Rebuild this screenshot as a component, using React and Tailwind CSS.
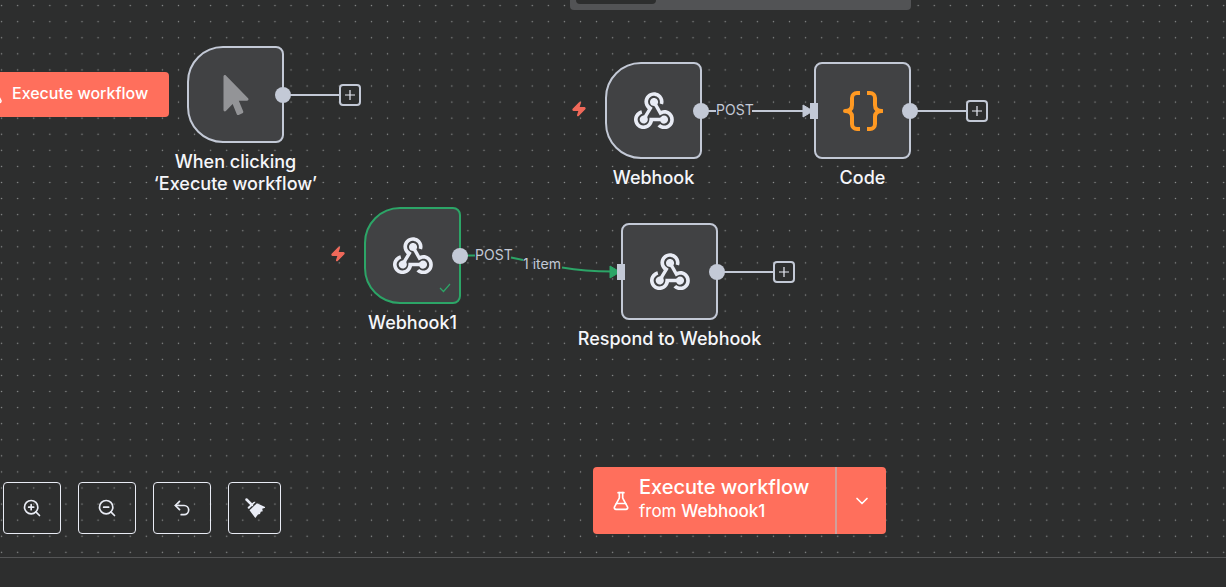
import { ChevronDown, FlaskConical, Undo2, Zap, ZoomIn, ZoomOut } from "lucide-react";
import { FaMousePointer } from "react-icons/fa";

function WebhookIcon() {
  return (
    <svg viewBox="0 0 256 239" className="w-10" fill="#e9ecf5" aria-hidden="true">
      <path d="M119.54 100.503c-10.61 17.836-20.775 35.108-31.152 52.25-2.665 4.401-3.984 7.986-1.855 13.58 5.878 15.454-2.414 30.493-17.998 34.575-14.697 3.851-29.016-5.808-31.932-21.543-2.584-13.927 8.224-27.58 23.58-29.757 1.286-.184 2.6-.205 4.762-.367l23.358-39.168C73.612 95.465 64.868 78.39 66.803 57.23c1.368-14.957 7.25-27.883 18-38.477 20.59-20.288 52.002-23.573 76.246-8.001 23.284 14.958 33.948 44.094 24.858 69.031-6.854-1.858-13.756-3.732-21.343-5.79 2.854-13.865.743-26.315-8.608-36.981-6.178-7.042-14.106-10.733-23.12-12.093-18.072-2.73-35.815 8.88-41.08 26.618-5.976 20.132 3.069 36.575 27.784 48.967z" />
      <path d="M149.841 79.41c7.475 13.187 15.065 26.573 22.587 39.836 38.02-11.763 66.686 9.284 76.97 31.817 12.422 27.219 3.93 59.457-20.465 76.25-25.04 17.238-56.707 14.293-78.892-7.851 5.654-4.733 11.336-9.487 17.407-14.566 21.912 14.192 41.077 13.524 55.305-3.282 12.133-14.337 11.87-35.714-.615-49.75-14.408-16.197-33.707-16.691-57.035-1.143-9.677-17.168-19.522-34.199-28.893-51.491-3.16-5.828-6.648-9.21-13.77-10.443-11.893-2.062-19.571-12.275-20.032-23.717-.453-11.316 6.214-21.545 16.634-25.53 10.322-3.949 22.435-.762 29.378 8.014 5.674 7.17 7.477 15.24 4.491 24.083-.83 2.466-1.905 4.852-3.07 7.774z" />
      <path d="M167.707 187.21h-45.77c-4.387 18.044-13.863 32.612-30.19 41.876-12.693 7.2-26.373 9.641-40.933 7.29-26.808-4.323-48.728-28.456-50.658-55.63-2.184-30.784 18.975-58.147 47.178-64.293 1.947 7.071 3.915 14.21 5.862 21.264-25.876 13.202-34.832 29.836-27.59 50.636 6.375 18.304 24.484 28.337 44.147 24.457 20.08-3.962 30.204-20.65 28.968-47.432 19.036 0 38.088-.197 57.126.097 7.434.117 13.173-.654 18.773-7.208 9.22-10.784 26.191-9.811 36.121.374 10.148 10.409 9.662 27.157-1.077 37.127-10.361 9.62-26.73 9.106-36.424-1.26-1.992-2.136-3.562-4.673-5.533-7.298z" />
    </svg>
  );
}

function CodeIcon() {
  return (
    <svg viewBox="0 0 40 42" className="h-[42px] w-10" fill="none" stroke="#ff9922" strokeWidth="4" strokeLinejoin="round" aria-hidden="true">
      <path d="M17 3h-3a5 5 0 0 0-5 5v7c0 4-2 6-7 6 5 0 7 2 7 6v7a5 5 0 0 0 5 5h3" />
      <path d="M24 3h3a5 5 0 0 1 5 5v7c0 4 2 6 7 6-5 0-7 2-7 6v7a5 5 0 0 1-5 5h-3" />
    </svg>
  );
}

function BroomIcon() {
  return (
    <svg viewBox="0 0 22 22" className="size-[22px]" fill="#e9ecf5" aria-hidden="true">
      <path d="M2.500 2.500L8 8" stroke="#e9ecf5" strokeWidth="2.500" strokeLinecap="round" />
      <path d="M3.800 11.200c-.3-1 .1-1.500 1-2l4.200-3.800c.8-.7 1.500-1 2.600-.500L5 11.900z" />
      <path d="M5.500 13.300L12.900 6.200l7.700 3.600c.8.4.5 1.100-.2 1.200l-2.200.8.6 2.400-2 .6-.8 2.200-2 .6L11.300 21z" />
    </svg>
  );
}

function DotGrid() {
  return (
    <svg className="absolute inset-0 h-full w-full" aria-hidden="true">
      <defs>
        <pattern id="dots" width="16.08" height="16.08" patternUnits="userSpaceOnUse" x="-6.44" y="-2.44">
          <circle cx="8.04" cy="8.04" r="0.7" fill="#929494" />
        </pattern>
      </defs>
      <rect width="100%" height="100%" fill="url(#dots)" />
    </svg>
  );
}

function Edges() {
  return (
    <svg className="absolute inset-0 h-full w-full" fill="none" strokeWidth="2" aria-hidden="true">
      <g stroke="#c3c9d6">
        <path d="M283 95H339" />
        <path d="M701 111H716M752 111H806" />
        <path d="M910 111H966" />
        <path d="M717 272H773" />
      </g>
      <path d="M803 105v12l10-6z" fill="#c3c9d6" stroke="#c3c9d6" strokeWidth="1" strokeLinejoin="round" />
      <path d="M460 255.500H475" stroke="#2ca567" />
      <path d="M511 257.500L523 260" stroke="#2ca567" />
      <path d="M562 267.500Q585 271.500 612 271.500" stroke="#2ca567" />
      <path d="M610 266v12l10-6z" fill="#2ca567" stroke="#2ca567" strokeWidth="1" strokeLinejoin="round" />
    </svg>
  );
}

function Node({ label, position, shape = "rounded-lg", border = "border-[#c3c9d6]", input, trigger, done, children }) {
  return (
    <div className={`absolute w-[97px] ${position}`}>
      <div className={`relative flex h-[97px] items-center justify-center border-2 bg-[#414244] ${shape} ${border}`}>
        {children}
        {input && <span className="absolute top-[39px] -left-[6px] h-4 w-2 bg-[#c3c9d6]" />}
        <span className="absolute top-[39px] -right-[9px] size-4 rounded-full bg-[#c3c9d6]" />
        {trigger && <Zap size={16} fill="currentColor" className="absolute top-[37px] -left-[36px] text-[#f0695a]" />}
        {done && (
          <svg viewBox="0 0 12 10" className="absolute right-[8px] bottom-[9px] h-[10px] w-3" fill="none" stroke="#2ca567" strokeWidth="1.200" aria-hidden="true">
            <path d="M1 5l3.500 3.500L11 1" />
          </svg>
        )}
      </div>
      <div className="relative left-1/2 mt-2 w-48 -translate-x-1/2 text-center text-lg leading-[22px] font-medium text-[#f5f6fa]">{label}</div>
    </div>
  );
}

function AddButton({ position }) {
  return (
    <button aria-label="Add node" className={`absolute flex size-[22px] items-center justify-center rounded border-2 border-[#c3c9d6] bg-[#2d2e2e] ${position}`}>
      <svg viewBox="0 0 10 10" className="size-[10px]" stroke="#e9ecf5" strokeWidth="1.200" aria-hidden="true">
        <path d="M5 0v10M0 5h10" />
      </svg>
    </button>
  );
}

function ToolButton({ label, width = "w-[58px]", children }) {
  return (
    <button aria-label={label} className={`flex h-[52px] items-center justify-center rounded border border-[#e9ecf5] text-[#e9ecf5] ${width}`}>
      {children}
    </button>
  );
}

const TRIGGER = "rounded-l-[36px] rounded-r-lg";

export default function App() {
  return (
    <div className="flex h-screen flex-col overflow-hidden bg-[#2d2e2e] font-['Inter',sans-serif]">
      <main className="relative flex flex-1 flex-col justify-end overflow-hidden">
        <DotGrid />
        <div className="absolute -top-6 left-[570px] h-[34px] w-[341px] rounded bg-[#525355] px-1.5 pb-1.5">
          <div className="h-7 w-20 rounded bg-[#2d2e2e]" />
        </div>
        <Edges />

        <button className="absolute top-[72px] -left-[29px] flex h-[45px] w-[198px] items-center gap-2 rounded bg-[#ff6f5c] pl-[15px] text-base font-medium text-white">
          <FlaskConical size={18} strokeWidth={2} />
          <span className="pb-1">Execute workflow</span>
        </button>

        <Node label={<>When clicking<br />‘Execute workflow’</>} position="top-[46px] left-[187px]" shape={TRIGGER}>
          <FaMousePointer className="size-10 text-[#939497]" />
        </Node>
        <Node label="Webhook" position="top-[62px] left-[605px]" shape={TRIGGER} trigger>
          <WebhookIcon />
        </Node>
        <Node label="Code" position="top-[62px] left-[814px]" input>
          <CodeIcon />
        </Node>
        <Node label="Webhook1" position="top-[207px] left-[364px]" shape={TRIGGER} border="border-[#2ca567]" trigger done>
          <WebhookIcon />
        </Node>
        <Node label="Respond to Webhook" position="top-[223px] left-[621px]" input>
          <WebhookIcon />
        </Node>

        <AddButton position="top-[84px] left-[339px]" />
        <AddButton position="top-[100px] left-[966px]" />
        <AddButton position="top-[261px] left-[773px]" />

        <span className="absolute top-[100px] left-[716px] text-sm leading-5 text-[#c3c9d6]">POST</span>
        <span className="absolute top-[245px] left-[475px] text-sm leading-5 text-[#c3c9d6]">POST</span>
        <span className="absolute top-[254px] left-[523px] text-sm leading-5 text-[#c3c9d6]">1 item</span>

        <div className="relative flex items-end pb-[23px] pl-[3px]">
          <div className="flex gap-[17px]">
            <ToolButton label="Zoom in"><ZoomIn size={20} /></ToolButton>
            <ToolButton label="Zoom out"><ZoomOut size={20} /></ToolButton>
            <ToolButton label="Undo"><Undo2 size={20} /></ToolButton>
            <ToolButton label="Tidy up" width="w-[53px]"><BroomIcon /></ToolButton>
          </div>
          <div className="ml-[312px] flex h-[67px] overflow-hidden rounded bg-[#ff6f5c] text-white">
            <button className="flex w-[242px] items-center gap-2 pl-[18px] text-left">
              <FlaskConical size={20} strokeWidth={2} />
              <span className="flex flex-col pb-1">
                <span className="text-xl leading-6 font-medium">Execute workflow</span>
                <span className="text-[17px] leading-6">from <span className="font-medium">Webhook1</span></span>
              </span>
            </button>
            <button aria-label="Choose trigger" className="flex w-[51px] items-center justify-center border-l-2 border-[#d0a09b]">
              <ChevronDown size={20} />
            </button>
          </div>
        </div>
      </main>
      <footer className="h-[30px] border-t border-[#545556] bg-[#2d2e2e]" />
    </div>
  );
}
